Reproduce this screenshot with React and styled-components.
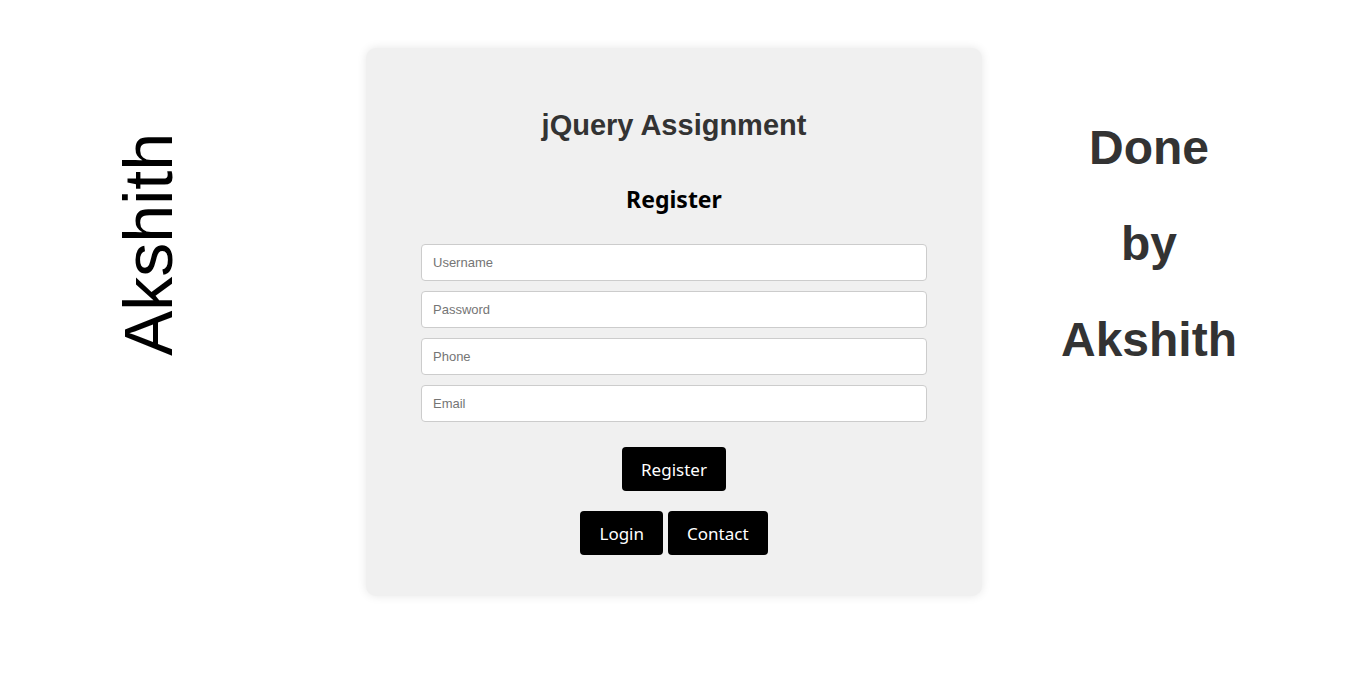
import React from "react";
import styled, { createGlobalStyle } from "styled-components";

const Global = createGlobalStyle`
  html, body { margin: 0; padding: 0; background: #fff; }
  body { font-family: "Liberation Sans", Arial, sans-serif; }
`;

export default function App() {
  return (
    <>
      <Global />
      <Page>
        <Side>
          <Vertical>Akshith</Vertical>
        </Side>

        <Card>
          <Title>jQuery Assignment</Title>
          <Heading>Register</Heading>

          <Form onSubmit={(e) => e.preventDefault()}>
            <Input type="text" placeholder="Username" />
            <Input type="password" placeholder="Password" />
            <Input type="tel" placeholder="Phone" />
            <Input type="email" placeholder="Email" />

            <ButtonRow $top={15}>
              <Button type="submit">Register</Button>
            </ButtonRow>
          </Form>

          <ButtonRow $top={20}>
            <Button type="button">Login</Button>
            <Button type="button">Contact</Button>
          </ButtonRow>
        </Card>

        <Credits>
          <Line>Done</Line>
          <Line>by</Line>
          <Line>Akshith</Line>
        </Credits>
      </Page>
    </>
  );
}

/* ---------------------- styled-components ---------------------- */

const Page = styled.div`
  width: 1350px;
  min-height: 681px;
  display: flex;
  align-items: flex-start;
  padding-top: 48px;
  box-sizing: border-box;
`;

const Side = styled.div`
  width: 296px;
  display: flex;
  justify-content: center;
  padding-top: 85px;
`;

const Vertical = styled.div`
  writing-mode: vertical-rl;
  transform: rotate(180deg);
  font-family: "Liberation Sans", Arial, sans-serif;
  font-size: 68px;
  line-height: 1;
  color: #000;
`;

const Card = styled.main`
  margin-left: 70px;
  width: 616px;
  height: 548px;
  box-sizing: border-box;
  padding: 42px 55px 0;
  background: #f0f0f0;
  border-radius: 10px;
  box-shadow: 0 0 10px rgba(0, 0, 0, 0.1);
  display: flex;
  flex-direction: column;
`;

const Title = styled.h1`
  margin: 19px 0 0;
  text-align: center;
  font-family: "Liberation Sans", Arial, sans-serif;
  font-size: 29px;
  line-height: 32px;
  font-weight: 700;
  color: #333;
`;

const Heading = styled.h2`
  margin: 42px 0 0;
  text-align: center;
  font-family: "Noto Sans", "Open Sans", sans-serif;
  font-size: 23px;
  line-height: 33px;
  font-weight: 700;
  color: #000;
`;

const Form = styled.form`
  margin-top: 28px;
  display: flex;
  flex-direction: column;
  gap: 10px;
`;

const Input = styled.input`
  height: 37px;
  box-sizing: border-box;
  padding: 0 11px;
  border: 1px solid #ccc;
  border-radius: 4px;
  background: #fff;
  font-family: "Liberation Sans", Arial, sans-serif;
  font-size: 13px;
  color: #333;
  outline: none;

  &::placeholder { color: #757575; }
`;

const ButtonRow = styled.div`
  margin-top: ${(p) => p.$top}px;
  display: flex;
  justify-content: center;
  gap: 5px;
`;

const Button = styled.button`
  height: 44px;
  padding: 0 19px;
  border: 0;
  border-radius: 4px;
  background: #000;
  color: #fff;
  font-family: "Noto Sans", "Open Sans", sans-serif;
  font-size: 17px;
  cursor: pointer;
`;

const Credits = styled.aside`
  width: 300px;
  margin-left: 17px;
  padding-top: 72px;
  display: flex;
  flex-direction: column;
  align-items: center;
  gap: 41px;
`;

const Line = styled.h1`
  margin: 0;
  font-family: "Liberation Sans", Arial, sans-serif;
  font-size: 48px;
  line-height: 55px;
  font-weight: 700;
  color: #333;
`;
